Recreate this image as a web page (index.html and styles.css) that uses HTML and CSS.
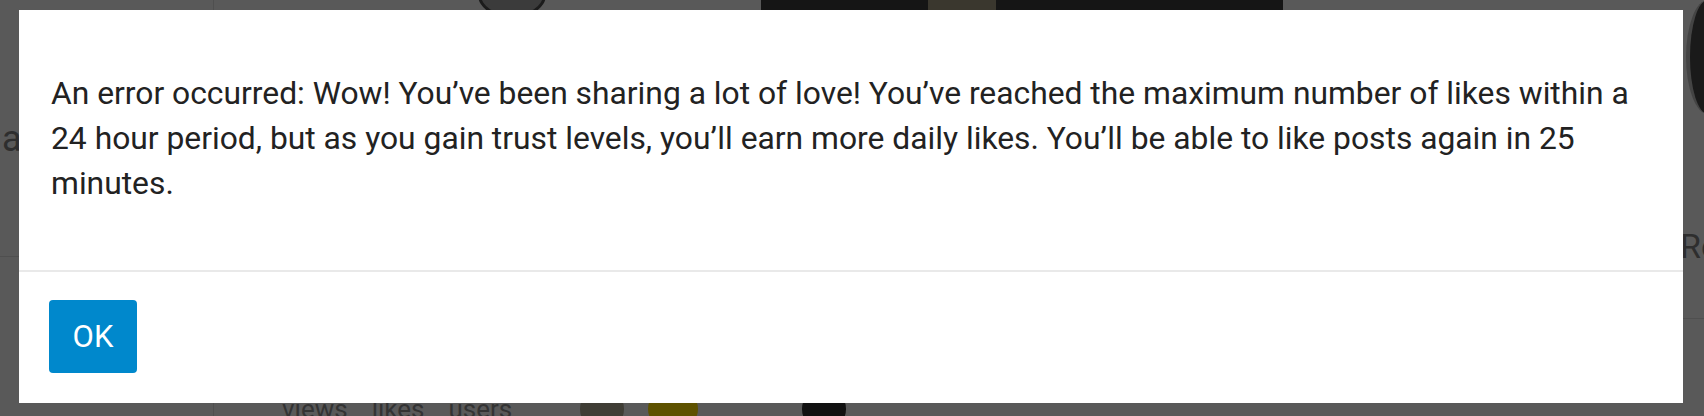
FILE: index.html
```html
<!DOCTYPE html>
<html lang="en">
<head>
  <meta charset="UTF-8" />
  <meta name="viewport" content="width=device-width, initial-scale=1.0"/>
  <title>Error</title>
  <link rel="stylesheet" href="styles.css">
</head>
<body>
  <div class="page">
    <aside class="sidebar">
      <div class="side-item">a</div>
      <div class="side-rule"></div>
    </aside>

    <main class="content">
      <div class="thumbs">
        <div class="thumb round"></div>
        <div class="thumb wide"></div>
      </div>
      <div class="stats">
        <span>views</span>
        <span>likes</span>
        <span>users</span>
        <div class="avatars">
          <span class="avatar grey"></span>
          <span class="avatar gold"></span>
          <span class="avatar black"></span>
        </div>
      </div>
    </main>

    <aside class="aside-right">
      <div class="big-avatar"></div>
      <div class="aside-title">Re</div>
      <div class="side-rule"></div>
    </aside>
  </div>

  <div class="modal">
    <div class="modal-body">
      An error occurred: Wow! You’ve been sharing a lot of love! You’ve reached the maximum number of likes within a 24 hour period, but as you gain trust levels, you’ll earn more daily likes. You’ll be able to like posts again in 25 minutes.
    </div>
    <div class="modal-footer">
      <button class="btn-primary">OK</button>
    </div>
  </div>
</body>
</html>
```

FILE: styles.css
```css
body {
  margin: 0;
  height: 416px;
  overflow: hidden;
  background-color: #595959;
  font-family: Roboto, "Liberation Sans", sans-serif;
}

/* page behind the dialog, dimmed */
.page {
  display: grid;
  grid-template-columns: 214px 1fr 24px;
  height: 416px;
  color: #2e2e2e;
}

.sidebar {
  border-right: 1px solid #4f4f4f;
  padding-top: 118px;
}

.side-item {
  font-size: 36px;
  padding-left: 2px;
  height: 138px;
}

.side-rule {
  border-top: 1px solid #4f4f4f;
}

.content {
  display: flex;
  flex-direction: column;
  justify-content: space-between;
}

.thumbs {
  display: flex;
  gap: 215px;
  padding-left: 264px;
  height: 10px;
  overflow: hidden;
}

.thumb {
  background-color: #3b3b3b;
}

.thumb.round {
  width: 62px;
  height: 40px;
  margin-top: -28px;
  border-radius: 50%;
  border: 3px solid #1c1c1c;
}

.thumb.wide {
  width: 522px;
  height: 10px;
  background: linear-gradient(to right, #151515 0 32%, #3a372e 32% 45%, #151515 45%);
}

.stats {
  display: flex;
  align-items: center;
  gap: 24px;
  padding-left: 68px;
  height: 30px;
  margin-bottom: -8px;
  font-size: 26px;
  color: #333;
}

.avatars {
  display: flex;
  gap: 24px;
  margin-left: 44px;
}

.avatar {
  width: 44px;
  height: 44px;
  border-radius: 50%;
}

.avatar.grey { background-color: #3f3d35; }
.avatar.gold { background-color: #5e5200; width: 50px; }
.avatar.black { background-color: #111; margin-left: 80px; }

.aside-right {
  display: flex;
  flex-direction: column;
}

.big-avatar {
  width: 40px;
  height: 114px;
  margin-left: 6px;
  border-radius: 50%;
  background-color: #1a1a1a;
  border-left: 4px solid #444;
}

.aside-title {
  margin-top: 112px;
  height: 92px;
  font-size: 34px;
  color: #2e2e2e;
}

/* dialog */
.modal {
  position: absolute;
  top: 10px;
  left: 19px;
  width: 1664px;
  background-color: #fff;
}

.modal-body {
  padding: 61px 32px 64px;
  font-size: 31.8px;
  line-height: 45px;
  color: #222;
}

.modal-footer {
  border-top: 2px solid #e9e9e9;
  padding: 28px 30px 30px;
}

.btn-primary {
  width: 88px;
  height: 73px;
  padding: 0;
  border: none;
  border-radius: 4px;
  background-color: #0088cc;
  color: white;
  font-family: Roboto, "Liberation Sans", sans-serif;
  font-size: 31px;
  cursor: pointer;
}
```
